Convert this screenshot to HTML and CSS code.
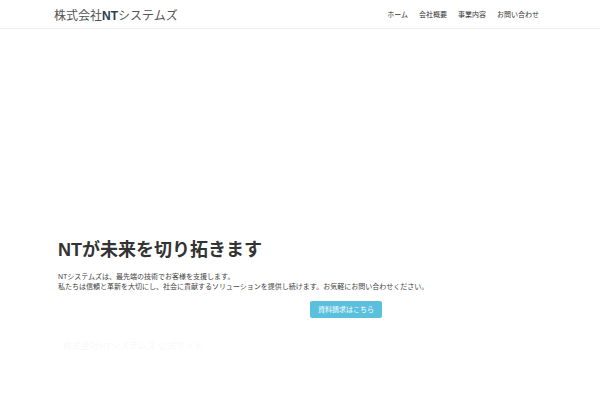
FILE: index.html
```html
<!DOCTYPE html>
<html lang="ja">
<head>
<meta charset="utf-8">
<title>株式会社NTシステムズ</title>
<link rel="stylesheet" href="styles.css">
</head>
<body>
<header class="site-header">
  <div class="header-inner">
    <a class="brand" href="#">株式会社<b>NT</b>システムズ</a>
    <nav class="nav">
      <a href="#">ホーム</a>
      <a href="#">会社概要</a>
      <a href="#">事業内容</a>
      <a href="#">お問い合わせ</a>
    </nav>
  </div>
</header>
<main class="hero">
  <div class="hero-inner">
    <h1 class="hero-title">NTが未来を切り拓きます</h1>
    <p class="hero-text">NTシステムズは、最先端の技術でお客様を支援します。<br>私たちは信頼と革新を大切にし、社会に貢献するソリューションを提供し続けます。お気軽にお問い合わせください。</p>
    <div class="hero-actions">
      <a class="btn" href="#">資料請求はこちら</a>
    </div>
    <p class="hero-faint">株式会社NTシステムズ 公式サイト</p>
  </div>
</main>
</body>
</html>
```

FILE: styles.css
```css
html, body {
  margin: 0;
  padding: 0;
  background: #ffffff;
}

body {
  font-family: "Liberation Sans", "Noto Sans CJK JP", sans-serif;
  color: #333333;
}

a {
  text-decoration: none;
  color: inherit;
}

.site-header {
  height: 28px;
  border-bottom: 1px solid #eeeeee;
  background: #ffffff;
}

.header-inner {
  height: 100%;
  padding: 0 61px 0 54px;
  display: flex;
  align-items: center;
  justify-content: space-between;
}

.brand {
  font-size: 12px;
  color: #555555;
}

.brand b {
  color: #2c3e50;
  font-weight: bold;
}

.nav {
  display: flex;
  gap: 11px;
  font-size: 7px;
  color: #333333;
}

.hero-inner {
  padding: 208px 58px 0 58px;
}

.hero-title {
  margin: 0 0 9px 0;
  font-size: 18px;
  line-height: 26px;
  font-weight: bold;
  color: #333333;
}

.hero-text {
  margin: 0 0 9px 0;
  font-size: 7px;
  line-height: 10px;
  color: #444444;
}

.hero-actions {
  display: flex;
  padding-left: 252px;
}

.btn {
  display: inline-block;
  height: 17px;
  line-height: 17px;
  padding: 0 8px;
  font-size: 7px;
  color: #ffffff;
  background: #5bc0de;
  border-radius: 2px;
}

.hero-faint {
  margin: 22px 0 0 5px;
  font-size: 9px;
  line-height: 12px;
  color: #f9f9f9;
}
```
